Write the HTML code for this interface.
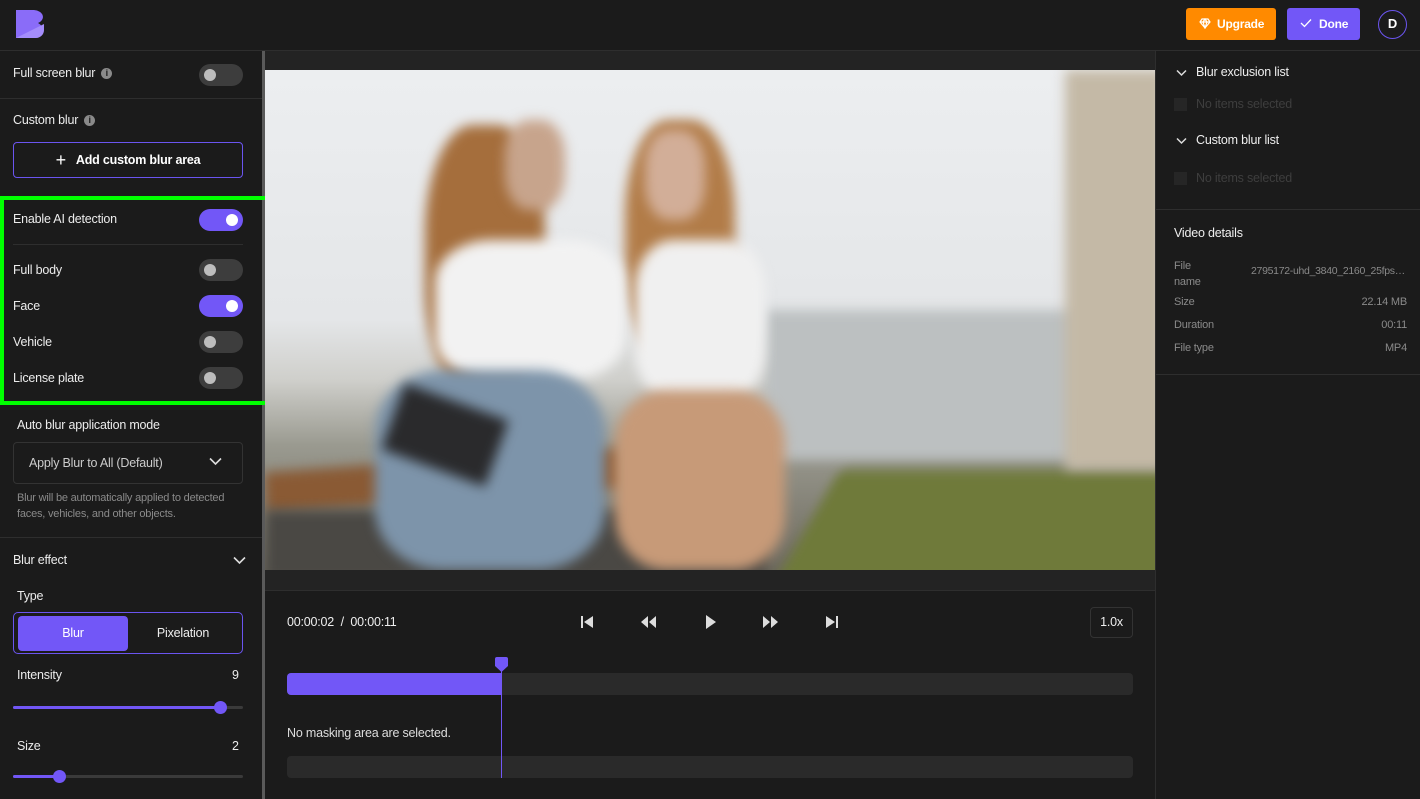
<!DOCTYPE html>
<html><head><meta charset="utf-8"><style>
*{margin:0;padding:0;box-sizing:border-box}
body{width:1420px;height:799px;background:#1b1b1b;font-family:"Liberation Sans",sans-serif;color:#e8e8e8;position:relative;overflow:hidden;font-size:12.5px;letter-spacing:-0.2px}
.abs{position:absolute}
.tog{position:absolute;left:199px;width:44px;height:22px;border-radius:11px;background:#3d3d3d}
.tog::after{content:"";position:absolute;left:5px;top:5px;width:12px;height:12px;border-radius:50%;background:#bdbdbd}
.tog.on{background:#7257f7}.tog.on::after{left:27px;background:#fff}
.lbl{position:absolute;left:13px;font-size:12.5px;color:#ececec}
.hr{position:absolute;height:1px;background:#2e2e2e}
.info{display:inline-block;width:11px;height:11px;border-radius:50%;background:#8a8a8a;color:#1b1b1b;font-size:9px;text-align:center;line-height:11px;font-weight:bold;margin-left:6px;vertical-align:1px}
.blob{position:absolute;filter:blur(6px)}
</style></head><body>
<svg class="abs" style="left:16px;top:10px" width="30" height="28" viewBox="0 0 30 28"><path d="M0 0H18a10 7 0 0 1 4 13a9 8 0 0 1-4 15H0z" fill="#8a6cf8"/><path d="M0 28L28 14V20a8 8 0 0 1-8 8z" fill="#a48cfb"/></svg>
<div class="abs" style="left:1186px;top:8px;width:90px;height:32px;background:#ff8a00;border-radius:3px;color:#fff;font-weight:bold;font-size:12px;line-height:32px;padding-left:31px">Upgrade</div>
<svg class="abs" style="left:1199px;top:18px" width="12" height="11" viewBox="0 0 12 11"><path d="M3 1H9L11 4L6 10L1 4Z M1 4H11 M6 10L4 4L6 1L8 4Z" fill="none" stroke="#fff" stroke-width="1.2"/></svg>
<div class="abs" style="left:1287px;top:8px;width:73px;height:32px;background:#7257f7;border-radius:3px;color:#fff;font-weight:bold;font-size:12px;line-height:32px;padding-left:32px">Done</div>
<svg class="abs" style="left:1300px;top:18px" width="12" height="10"><path d="M1 5L4.5 8.5L11 1.5" fill="none" stroke="#fff" stroke-width="1.3"/></svg>
<div class="abs" style="left:1378px;top:10px;width:29px;height:29px;border:1.5px solid #6b55f0;border-radius:50%;text-align:center;line-height:26px;font-weight:bold;font-size:13px;color:#fff">D</div>
<div class="hr" style="left:0;top:50px;width:1420px"></div>
<div class="abs" style="left:262px;top:51px;width:3px;height:748px;background:#5a5a5a"></div>
<div class="lbl" style="top:66px">Full screen blur<span class="info">i</span></div>
<div class="tog" style="top:64px"></div>
<div class="hr" style="left:0;top:98px;width:262px"></div>
<div class="lbl" style="top:113px">Custom blur<span class="info">i</span></div>
<div class="abs" style="left:13px;top:142px;width:230px;height:36px;border:1px solid #6b55f0;border-radius:4px;text-align:center;line-height:34px;font-weight:bold;font-size:12.5px;color:#fff"><span style="font-weight:normal;font-size:18px;vertical-align:-2px;margin-right:10px">+</span>Add custom blur area</div>
<div class="lbl" style="top:212px">Enable AI detection</div>
<div class="tog on" style="top:209px"></div>
<div class="hr" style="left:13px;top:244px;width:230px"></div>
<div class="lbl" style="top:263px">Full body</div><div class="tog" style="top:259px"></div>
<div class="lbl" style="top:299px">Face</div><div class="tog on" style="top:295px"></div>
<div class="lbl" style="top:335px">Vehicle</div><div class="tog" style="top:331px"></div>
<div class="lbl" style="top:371px">License plate</div><div class="tog" style="top:367px"></div>
<div class="abs" style="left:0;top:196px;width:373px;height:209px;border:4px solid #00ff00"></div>
<div class="lbl" style="left:17px;top:418px">Auto blur application mode</div>
<div class="abs" style="left:13px;top:442px;width:230px;height:42px;border:1px solid #333;border-radius:4px;color:#ccc;line-height:40px;padding-left:15px">Apply Blur to All (Default)</div>
<svg class="abs" style="left:209px;top:457px" width="13" height="9"><path d="M1 1.5L6.5 7L12 1.5" fill="none" stroke="#ddd" stroke-width="1.6"/></svg>
<div class="abs" style="left:17px;top:490px;font-size:11px;color:#8a8a8a;line-height:16px;width:230px">Blur will be automatically applied to detected faces, vehicles, and other objects.</div>
<div class="hr" style="left:0;top:537px;width:262px"></div>
<div class="lbl" style="top:553px">Blur effect</div>
<svg class="abs" style="left:233px;top:556px" width="13" height="9"><path d="M1 1.5L6.5 7L12 1.5" fill="none" stroke="#ddd" stroke-width="1.6"/></svg>
<div class="lbl" style="left:17px;top:589px">Type</div>
<div class="abs" style="left:13px;top:612px;width:230px;height:42px;border:1px solid #6b55f0;border-radius:5px"></div>
<div class="abs" style="left:18px;top:616px;width:110px;height:35px;background:#7257f7;border-radius:4px;text-align:center;line-height:35px;color:#fff">Blur</div>
<div class="abs" style="left:128px;top:616px;width:110px;height:35px;text-align:center;line-height:35px;color:#eee">Pixelation</div>
<div class="lbl" style="left:17px;top:668px">Intensity</div><div class="lbl" style="left:232px;top:668px">9</div>
<div class="abs" style="left:13px;top:706px;width:230px;height:3px;background:#3a3a3a;border-radius:2px"></div>
<div class="abs" style="left:13px;top:706px;width:207px;height:3px;background:#7257f7;border-radius:2px"></div>
<div class="abs" style="left:214px;top:701px;width:13px;height:13px;background:#7257f7;border-radius:50%"></div>
<div class="lbl" style="left:17px;top:739px">Size</div><div class="lbl" style="left:232px;top:739px">2</div>
<div class="abs" style="left:13px;top:775px;width:230px;height:3px;background:#3a3a3a;border-radius:2px"></div>
<div class="abs" style="left:13px;top:775px;width:46px;height:3px;background:#7257f7;border-radius:2px"></div>
<div class="abs" style="left:53px;top:770px;width:13px;height:13px;background:#7257f7;border-radius:50%"></div>
<div class="abs" style="left:265px;top:51px;width:890px;height:539px;background:#232323"></div>
<div class="abs" style="left:265px;top:70px;width:890px;height:500px;overflow:hidden;background:linear-gradient(180deg,#eceef0 0%,#e4e6e8 50%,#cfcfcb 62%,#9a9a90 75%,#6e6a5e 100%)">
 <div class="blob" style="left:500px;top:240px;width:320px;height:150px;background:#bcc0c1"></div>
 <div class="blob" style="left:540px;top:400px;width:400px;height:120px;background:#6f7a3a;transform:skewX(-30deg)"></div>
 <div class="blob" style="left:800px;top:0;width:100px;height:400px;background:#c4b9a6"></div>
 <div class="blob" style="left:0;top:390px;width:360px;height:40px;background:#8a5a34;transform:rotate(-4deg)"></div>
 <div class="blob" style="left:0;top:440px;width:500px;height:70px;background:#4a4844"></div>
 <div class="blob" style="left:160px;top:55px;width:120px;height:270px;background:#a56e3c;border-radius:40%"></div>
 <div class="blob" style="left:360px;top:50px;width:110px;height:240px;background:#b27c48;border-radius:40%"></div>
 <div class="blob" style="left:170px;top:170px;width:190px;height:140px;background:#f2f2f2;border-radius:30%"></div>
 <div class="blob" style="left:370px;top:170px;width:130px;height:160px;background:#f0f0f0;border-radius:30%"></div>
 <div class="blob" style="left:110px;top:300px;width:230px;height:200px;background:#7d94aa;border-radius:30%"></div>
 <div class="blob" style="left:350px;top:320px;width:170px;height:180px;background:#c79a78;border-radius:30%"></div>
 <div class="blob" style="left:125px;top:330px;width:110px;height:70px;background:#2a2a2c;transform:rotate(20deg)"></div>
 <div class="blob" style="left:240px;top:50px;width:60px;height:90px;background:#c7a48c;border-radius:40%"></div>
 <div class="blob" style="left:380px;top:60px;width:60px;height:90px;background:#d2ae98;border-radius:40%"></div>
</div>
<div class="hr" style="left:265px;top:590px;width:890px"></div>
<div class="abs" style="left:287px;top:615px;font-size:12.5px;color:#eee">00:00:02 &nbsp;/ &nbsp;00:00:11</div>
<svg class="abs" style="left:578px;top:614px" width="264" height="16" fill="#ddd">
 <rect x="3" y="2" width="2" height="12"/><path d="M15 2V14L6 8Z"/>
 <path d="M70 2V14L63 8Z M78 2V14L71 8Z"/>
 <path d="M128 1V15L138 8Z"/>
 <path d="M185 2V14L192 8Z M193 2V14L200 8Z"/>
 <path d="M248 2V14L257 8Z"/><rect x="258" y="2" width="2" height="12"/>
</svg>
<div class="abs" style="left:1090px;top:607px;width:43px;height:31px;border:1px solid #333;border-radius:4px;text-align:center;line-height:29px;color:#eee">1.0x</div>
<div class="abs" style="left:287px;top:673px;width:846px;height:22px;background:#2a2a2a;border-radius:4px"></div>
<div class="abs" style="left:287px;top:673px;width:215px;height:22px;background:#7257f7;border-radius:4px 0 0 4px"></div>
<div class="abs" style="left:501px;top:668px;width:1px;height:110px;background:#7257f7"></div>
<svg class="abs" style="left:494px;top:657px" width="16" height="16"><path d="M1 2a2 2 0 0 1 2-2H12a2 2 0 0 1 2 2V9L7.5 15L1 9Z" fill="#7257f7"/></svg>
<div class="abs" style="left:287px;top:726px;color:#ddd">No masking area are selected.</div>
<div class="abs" style="left:287px;top:756px;width:846px;height:22px;background:#2a2a2a;border-radius:4px"></div>
<div class="abs" style="left:501px;top:756px;width:1px;height:22px;background:#7257f7"></div>
<div class="abs" style="left:1155px;top:51px;width:1px;height:748px;background:#2e2e2e"></div>
<svg class="abs" style="left:1176px;top:69px" width="11" height="8"><path d="M1 1.5L5.5 6L10 1.5" fill="none" stroke="#ddd" stroke-width="1.5"/></svg>
<div class="abs" style="left:1196px;top:65px;color:#eee">Blur exclusion list</div>
<div class="abs" style="left:1174px;top:98px;width:13px;height:13px;background:#262626"></div>
<div class="abs" style="left:1196px;top:97px;color:#3e3e3e">No items selected</div>
<svg class="abs" style="left:1176px;top:137px" width="11" height="8"><path d="M1 1.5L5.5 6L10 1.5" fill="none" stroke="#ddd" stroke-width="1.5"/></svg>
<div class="abs" style="left:1196px;top:133px;color:#eee">Custom blur list</div>
<div class="abs" style="left:1174px;top:172px;width:13px;height:13px;background:#262626"></div>
<div class="abs" style="left:1196px;top:171px;color:#3e3e3e">No items selected</div>
<div class="hr" style="left:1156px;top:209px;width:264px"></div>
<div class="abs" style="left:1174px;top:226px;color:#eee">Video details</div>
<div class="abs" style="left:1174px;top:258px;font-size:11px;color:#8a8a8a;line-height:16px">File<br>name</div>
<div class="abs" style="left:1251px;top:265px;width:156px;font-size:10.5px;color:#8a8a8a;white-space:nowrap;overflow:hidden;text-overflow:ellipsis;letter-spacing:-0.3px">2795172-uhd_3840_2160_25fps.mp4</div>
<div class="abs" style="right:13px;top:296px;font-size:11px;color:#8a8a8a">22.14 MB</div><div class="abs" style="left:1174px;top:296px;font-size:11px;color:#8a8a8a">Size</div>
<div class="abs" style="left:1174px;top:319px;font-size:11px;color:#8a8a8a">Duration</div><div class="abs" style="right:13px;top:319px;font-size:11px;color:#8a8a8a">00:11</div>
<div class="abs" style="left:1174px;top:342px;font-size:11px;color:#8a8a8a">File type</div><div class="abs" style="right:13px;top:342px;font-size:11px;color:#8a8a8a">MP4</div>
<div class="hr" style="left:1156px;top:374px;width:264px"></div>
</body></html>
